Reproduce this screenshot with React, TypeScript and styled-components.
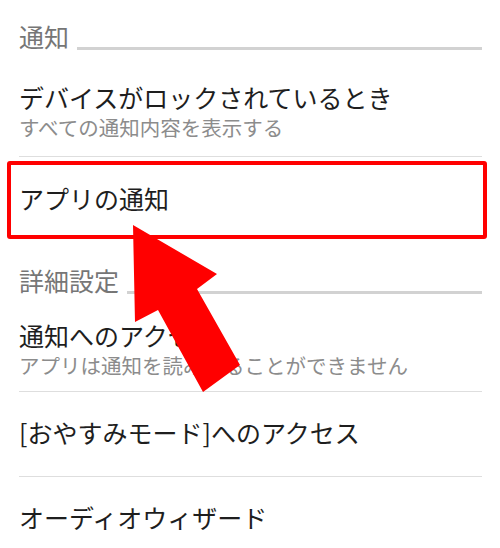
import React from "react";
import styled, { createGlobalStyle } from "styled-components";

const GlobalStyle = createGlobalStyle`
  html, body {
    margin: 0;
    padding: 0;
    background: #ffffff;
  }
  body {
    font-family: "Noto Sans CJK JP", "Noto Sans", sans-serif;
  }
`;

const Page = styled.div`
  position: relative;
  width: 500px;
  height: 548px;
  overflow: hidden;
  background: #fff;
`;

const Header = styled.div<{ $height: number; $top: number }>`
  display: flex;
  align-items: flex-start;
  gap: 8px;
  height: ${(p) => p.$height}px;
  box-sizing: border-box;
  padding: ${(p) => p.$top}px 18px 0 19px;
`;

const HeaderText = styled.div`
  font-size: 25px;
  line-height: 30px;
  color: #767676;
  white-space: nowrap;
`;

const HeaderLine = styled.div`
  flex: 1;
  height: 3px;
  margin-top: 26px;
  background: #d2d2d2;
`;

const Item = styled.div<{ $height: number; $divider?: boolean }>`
  display: flex;
  flex-direction: column;
  justify-content: center;
  height: ${(p) => p.$height}px;
  box-sizing: border-box;
  margin: 0 18px 0 19px;
  padding-bottom: 4px;
  border-bottom: ${(p) => (p.$divider ? "1px solid #dedede" : "none")};
`;

const Highlight = styled.div`
  display: flex;
  align-items: center;
  height: 78px;
  box-sizing: border-box;
  margin: 4px 13px 0 7px;
  padding: 0 0 4px 8px;
  border: 4px solid #ff0000;
  border-radius: 3px;
`;

const Title = styled.div`
  font-size: 25px;
  line-height: 31px;
  color: #1e1e1e;
  white-space: nowrap;
`;

const Subtitle = styled.div`
  font-size: 20.5px;
  line-height: 28px;
  color: #8c8c8c;
  white-space: nowrap;
`;

const Arrow = styled.svg`
  position: absolute;
  left: 0;
  top: 0;
  pointer-events: none;
`;

export default function App() {
  return (
    <>
      <GlobalStyle />
      <Page>
        <Header $height={70} $top={21}>
          <HeaderText>通知</HeaderText>
          <HeaderLine />
        </Header>
        <Item $height={87} $divider>
          <Title>デバイスがロックされているとき</Title>
          <Subtitle>すべての通知内容を表示する</Subtitle>
        </Item>
        <Highlight>
          <Title>アプリの通知</Title>
        </Highlight>
        <Header $height={73} $top={26}>
          <HeaderText>詳細設定</HeaderText>
          <HeaderLine />
        </Header>
        <Item $height={80} $divider>
          <Title>通知へのアクセス</Title>
          <Subtitle>アプリは通知を読み取ることができません</Subtitle>
        </Item>
        <Item $height={85} $divider>
          <Title>[おやすみモード]へのアクセス</Title>
        </Item>
        <Item $height={85}>
          <Title>オーディオウィザード</Title>
        </Item>
        <Arrow width="500" height="548" viewBox="0 0 500 548">
          <polygon
            points="133,225 217,274 197,289 240,365 203,392 158,310 135,322"
            fill="#ff0000"
          />
        </Arrow>
      </Page>
    </>
  );
}
